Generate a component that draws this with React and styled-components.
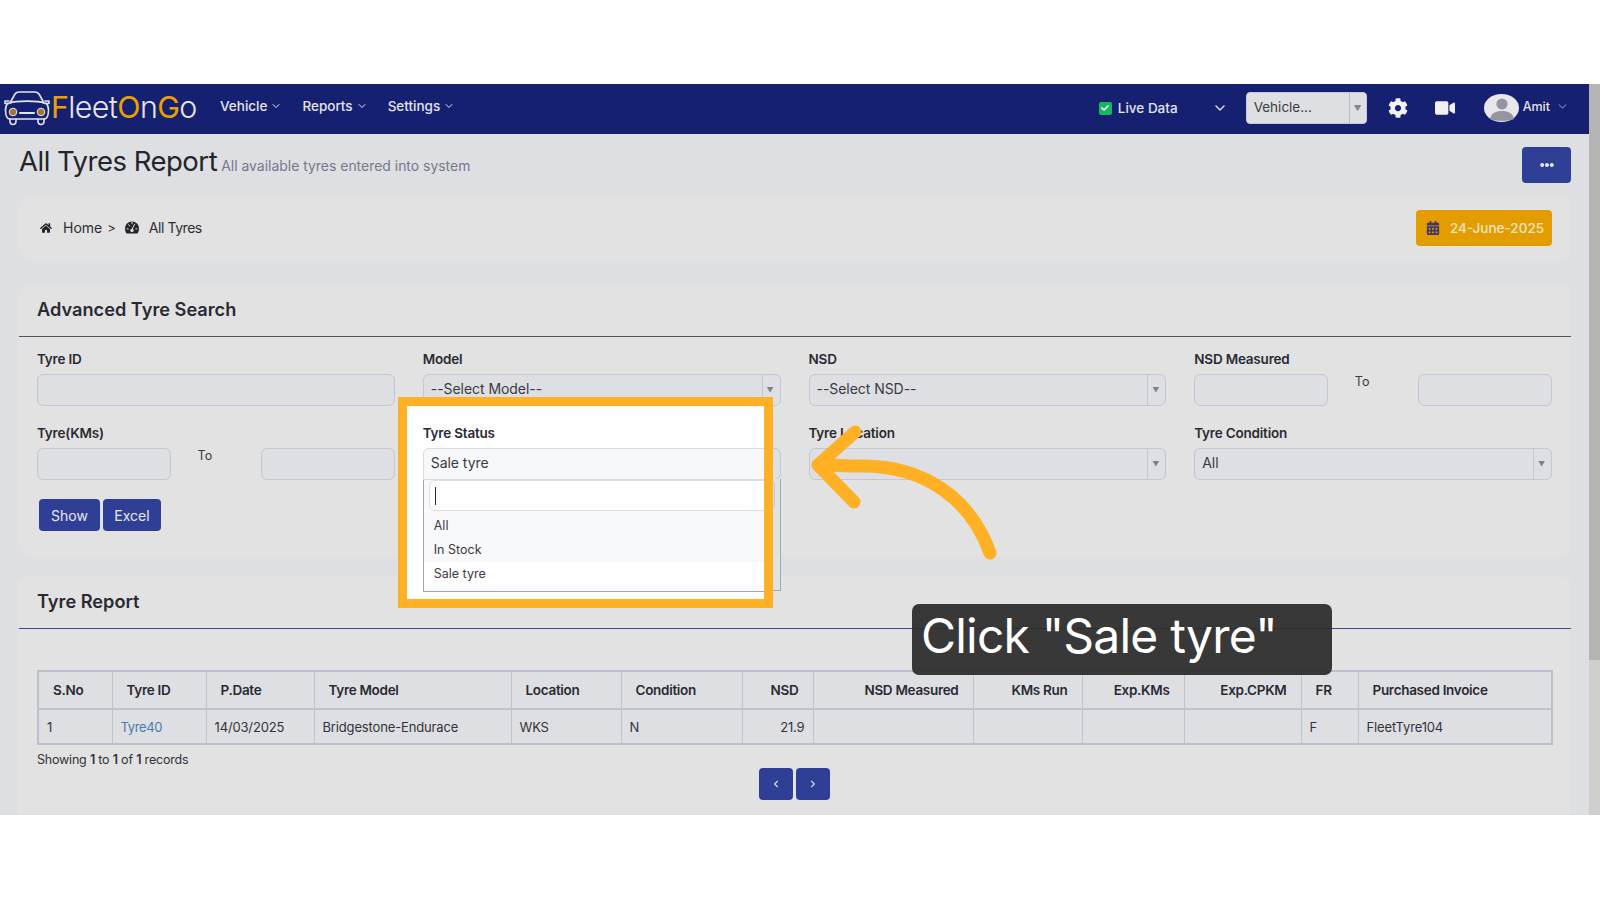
import styled, { createGlobalStyle } from "styled-components";
import {
  FaHome,
  FaCalendarAlt,
  FaCog,
  FaVideo,
  FaEllipsisH,
  FaCheck,
  FaChevronLeft,
  FaChevronRight,
} from "react-icons/fa";
import { ChevronDown } from "lucide-react";

const GlobalStyle = createGlobalStyle`
  html, body {
    margin: 0;
    padding: 0;
    background: #fff;
    font-family: Inter, "Liberation Sans", sans-serif;
    color: #2a2a33;
  }
  * {
    box-sizing: border-box;
  }
`;

const Screen = styled.div`
  position: relative;
  width: 1600px;
  height: 900px;
  padding-top: 84px;
  background: #fff;
  overflow: hidden;
`;

const Frame = styled.div`
  display: flex;
  height: 731px;
`;

const Scrollbar = styled.div`
  width: 11px;
  background: #cfcfcf;
`;

const ScrollThumb = styled.div`
  height: 576px;
  background: #b4b4b4;
`;

const Main = styled.div`
  width: 1589px;
  height: 100%;
  background: #dedfe2;
  overflow: hidden;
`;

const Navbar = styled.nav`
  display: flex;
  align-items: center;
  height: 50px;
  background: #162070;
  color: #e3e4ea;
`;

const Logo = styled.div`
  display: flex;
  align-items: center;
  width: 220px;
  margin-top: -2px;
  padding-left: 3px;
  flex-shrink: 0;
`;

const LogoText = styled.span`
  margin-top: -2px;
  font-size: 30.4px;
  font-weight: 300;
  letter-spacing: -0.6px;
  color: #e6e7ee;
`;

const LogoAccent = styled.span`
  color: #e9a000;
  font-weight: 400;
`;

const NavItem = styled.div`
  display: flex;
  align-items: center;
  gap: 3px;
  margin-right: 20px;
  margin-top: -6px;
  font-size: 13.5px;
  font-weight: 500;
`;

const NavRight = styled.div`
  display: flex;
  align-items: center;
  margin-left: auto;
  margin-top: -3px;
`;

const LiveCheck = styled.span`
  display: flex;
  align-items: center;
  justify-content: center;
  width: 13px;
  height: 13px;
  margin-top: 1px;
  border-radius: 2px;
  background: #16b85e;
  color: #fff;
  font-size: 8px;
`;

const LiveLabel = styled.span`
  margin-left: 6px;
  margin-top: 1px;
  font-size: 13.5px;
  font-weight: 500;
`;

const LiveChevron = styled(ChevronDown)`
  margin-left: 34px;
  margin-top: 1px;
`;

const VehicleSelect = styled.div`
  display: flex;
  align-items: stretch;
  width: 121px;
  height: 32px;
  margin-left: 18px;
  border-radius: 4px;
  background: #dedfe2;
  border: 1px solid #c7c9d2;
  color: #3b3b44;
  font-size: 13.5px;
`;

const VehicleValue = styled.span`
  flex: 1;
  padding: 6px 0 0 7px;
`;

const VehicleCaret = styled.span`
  display: flex;
  align-items: center;
  justify-content: center;
  width: 17px;
  border-left: 1px solid #b8bac4;
  color: #85868f;
  font-size: 8px;
`;

const NavIcon = styled.span`
  display: flex;
  margin-left: ${({ $gap }) => $gap}px;
  color: #f1f1f4;
  font-size: 20px;
`;

const Avatar = styled.svg`
  width: 35px;
  height: 28px;
  margin-left: 29px;
`;

const UserName = styled.span`
  margin-left: 4px;
  margin-top: -2px;
  font-size: 12.5px;
  font-weight: 500;
`;

const UserChevron = styled(ChevronDown)`
  margin: -3px 20px 0 6px;
  opacity: 0.45;
`;

const PageHead = styled.header`
  display: flex;
  align-items: flex-start;
  justify-content: space-between;
  height: 62px;
  padding: 13px 18px 0 19px;
`;

const TitleRow = styled.div`
  display: flex;
  align-items: baseline;
  gap: 4px;
  margin-top: -1px;
`;

const Title = styled.h1`
  margin: 0;
  font-size: 27.5px;
  line-height: 30px;
  font-weight: 400;
  letter-spacing: -0.5px;
  color: #24242b;
`;

const Subtitle = styled.span`
  font-size: 13.95px;
  color: #75798c;
`;

const MenuButton = styled.button`
  display: flex;
  align-items: center;
  justify-content: center;
  width: 49px;
  height: 36px;
  border: 0;
  border-radius: 4px;
  background: #303f96;
  color: #e6e7ef;
  font-size: 14px;
`;

const Card = styled.section`
  margin: 0 18px ${({ $bottom }) => $bottom}px 19px;
  border-radius: 10px;
  background: #e2e2e2;
`;

const BreadcrumbBar = styled(Card)`
  display: flex;
  align-items: center;
  justify-content: space-between;
  height: 65px;
  padding: 0 19px 0 21px;
`;

const Crumbs = styled.div`
  display: flex;
  align-items: center;
  margin-top: -2px;
  font-size: 14px;
  color: #2e2e36;
`;

const CrumbIcon = styled.span`
  display: flex;
  margin-right: 10px;
  font-size: 12px;
  color: #24242b;
`;

const HomeIcon = styled(CrumbIcon)`
  margin-right: 11px;
`;

const CrumbSep = styled.span`
  margin: 0 9px 0 5px;
  font-size: 13px;
`;

const CrumbCurrent = styled.span`
  letter-spacing: -0.45px;
`;

const DateBadge = styled.div`
  display: flex;
  align-items: center;
  gap: 10px;
  width: 136px;
  height: 36px;
  margin-top: -1px;
  padding-left: 10px;
  border-radius: 4px;
  background: #e49d00;
  color: #f1e3c4;
  font-size: 13.5px;
  font-weight: 500;
  white-space: nowrap;
  svg {
    color: #3d3670;
  }
`;

const CardTitle = styled.h2`
  display: flex;
  align-items: center;
  height: 53px;
  margin: 0;
  padding: 0 18px 2px 18px;
  font-size: 18.2px;
  font-weight: 600;
  color: #2a2a33;
  border-bottom: 1px solid ${({ $line }) => $line};
`;

const FormGrid = styled.div`
  display: grid;
  grid-template-columns: repeat(4, 1fr);
  column-gap: 28px;
  row-gap: 18px;
  padding: 13px 19px 0 18px;
`;

const Field = styled.div`
  position: relative;
`;

const FieldLabel = styled.label`
  display: block;
  height: 18px;
  margin-bottom: 6px;
  font-size: 13.5px;
  line-height: 18px;
  font-weight: 600;
  letter-spacing: -0.2px;
  color: #2a2a33;
`;

const TextInput = styled.input`
  display: block;
  width: 100%;
  height: 32px;
  border: 1px solid #c4c7d2;
  border-radius: 6px;
  background: #dedfe2;
`;

const RangeRow = styled.div`
  display: flex;
  justify-content: space-between;
`;

const RangeInput = styled(TextInput)`
  width: 134px;
`;

const RangeTo = styled.span`
  margin-left: -22px;
  font-size: 12.5px;
  color: #3a3a44;
`;

const SelectBox = styled.div`
  display: flex;
  align-items: stretch;
  height: 32px;
  border: 1px solid #c4c7d2;
  border-radius: 6px;
  background: #dedfe2;
  color: #3a3a44;
  font-size: 14px;
`;

const SelectValue = styled.span`
  flex: 1;
  padding: 5px 0 0 7px;
  letter-spacing: -0.05px;
`;

const SelectCaret = styled.span`
  display: flex;
  align-items: center;
  justify-content: center;
  width: 18px;
  padding-right: 2px;
  border-left: 1px solid #c4c7d2;
  color: #7f8089;
  font-size: 7px;
`;

const StaleDropdown = styled.div`
  position: absolute;
  top: 55px;
  left: 0;
  width: 358px;
  height: 112px;
  border: 1px solid #a4a7b4;
  border-top: 0;
  background: #e2e2e2;
`;

const StaleSearch = styled.div`
  height: 31px;
  margin: 0 5px;
  border: 1px solid #c4c7d2;
  border-radius: 6px;
`;

const Spotlight = styled.div`
  position: absolute;
  top: -27px;
  left: -25px;
  width: 375px;
  height: 211px;
  padding: 18px 0 0 16px;
  border: 9px solid #ffb024;
  background: #fff;
  overflow: hidden;
  z-index: 2;
`;

const SpotlightInner = styled.div`
  width: 358px;
`;

const OpenSelect = styled(SelectBox)`
  border-color: #d9dbe2;
  border-bottom-left-radius: 0;
  background: #f7f8fa;
  color: #3a3a44;
`;

const OpenList = styled.div`
  height: 112px;
  border: 1px solid #a4a7b4;
  border-top: 0;
  background: #f8f9fa;
`;

const SearchBox = styled.div`
  display: flex;
  align-items: center;
  height: 31px;
  margin: 0 5px;
  padding-left: 5px;
  border: 1px solid #dcdee4;
  border-radius: 6px;
  background: #fff;
`;

const Caret = styled.span`
  width: 1px;
  height: 18px;
  background: #2a2a33;
`;

const OptionRow = styled.div`
  height: 24px;
  padding: 3px 0 0 10px;
  font-size: 12.5px;
  line-height: 18px;
  color: #3a3a44;
  background: ${({ $active }) => ($active ? "#fff" : "transparent")};
`;

const OptionGap = styled.div`
  height: 3px;
`;

const ButtonRow = styled.div`
  display: flex;
  gap: 3px;
  padding: 19px 19px 26px 20px;
`;

const ActionButton = styled.button`
  height: 32px;
  width: ${({ $w }) => $w}px;
  border: 0;
  border-radius: 4px;
  background: #303f96;
  color: #e8e9f2;
  font-family: inherit;
  font-size: 14px;
`;

const TableWrap = styled.div`
  padding: 41px 18px 40px;
`;

const Table = styled.table`
  width: 1514px;
  table-layout: fixed;
  border-collapse: collapse;
  border: 2px solid #bdc0cb;
  font-size: 13px;
  background: #dedfe2;
`;

const HeadCell = styled.th`
  height: 38px;
  padding: 0 ${({ $right }) => ($right ? "14px" : "0")} 0 ${({ $right }) => ($right ? "0" : "14px")};
  border: 1px solid #c0c3cd;
  border-bottom-width: 2px;
  font-size: 13.5px;
  font-weight: 600;
  letter-spacing: -0.3px;
  color: #2a2a33;
  text-align: ${({ $right }) => ($right ? "right" : "left")};
`;

const BodyCell = styled.td`
  height: 35px;
  padding: 0 8px;
  border: 1px solid #c0c3cd;
  letter-spacing: -0.15px;
  color: #33333c;
  text-align: ${({ $right }) => ($right ? "right" : "left")};
`;

const TyreLink = styled.a`
  color: #4a7bb0;
  letter-spacing: -0.35px;
`;

const TableInfo = styled.div`
  margin-top: 7px;
  height: 16px;
  font-size: 12.5px;
  letter-spacing: -0.2px;
  color: #33333c;
`;

const InfoStrong = styled.b`
  font-weight: 600;
`;

const Pager = styled.div`
  display: flex;
  justify-content: center;
  gap: 3px;
  margin-right: 1px;
`;

const PagerButton = styled.button`
  display: flex;
  align-items: center;
  justify-content: center;
  width: 34px;
  height: 32px;
  border: 0;
  border-radius: 4px;
  background: #303f96;
  color: #dfe1ee;
  font-size: 8px;
`;

const Pointer = styled.svg`
  position: absolute;
  top: 420px;
  left: 800px;
  width: 210px;
  height: 160px;
  z-index: 3;
`;

const Callout = styled.div`
  position: absolute;
  top: 604px;
  left: 912px;
  width: 420px;
  height: 71px;
  padding-left: 9px;
  border-radius: 7px;
  background: rgba(45, 45, 45, 0.94);
  color: #fff;
  font-size: 48px;
  line-height: 64px;
  letter-spacing: -0.8px;
  white-space: nowrap;
  z-index: 3;
`;

const columns = [
  { name: "S.No", width: 74 },
  { name: "Tyre ID", width: 94 },
  { name: "P.Date", width: 108 },
  { name: "Tyre Model", width: 197 },
  { name: "Location", width: 110 },
  { name: "Condition", width: 121 },
  { name: "NSD", width: 71, right: true },
  { name: "NSD Measured", width: 160, right: true },
  { name: "KMs Run", width: 109, right: true },
  { name: "Exp.KMs", width: 102, right: true },
  { name: "Exp.CPKM", width: 117, right: true },
  { name: "FR", width: 57 },
  { name: "Purchased Invoice", width: 194 },
];

const CarLogo = () => (
  <svg width="48" height="36" viewBox="0 0 48 36" fill="none">
    <g stroke="#e3e4ea" strokeWidth="1.6" strokeLinecap="round" strokeLinejoin="round">
      <path d="M7 13 L12 4 C13 2.5 14 2 16 2 H32 C34 2 35 2.5 36 4 L41 13" />
      <path d="M7 13 C12 10.5 36 10.5 41 13" />
      <path d="M5 13 C3 15 2.5 17 2.5 20 C2.5 26 4 29 7 29 H41 C44 29 45.5 26 45.5 20 C45.5 17 45 15 43 13" />
      <path d="M6 13.5 H2 V11 H6" />
      <path d="M42 13.5 H46 V11 H42" />
      <path d="M17 23 H31" strokeWidth="2" />
      <path d="M7 29 V31 C7 33 8 34.5 10 34.5 C12 34.5 13 33 13 31 V29" />
      <path d="M35 29 V31 C35 33 36 34.5 38 34.5 C40 34.5 41 33 41 31 V29" />
    </g>
    <circle cx="10" cy="22" r="3.8" fill="#a5762a" stroke="#e3e4ea" />
    <circle cx="38" cy="22" r="3.8" fill="#a5762a" stroke="#e3e4ea" />
  </svg>
);

const GaugeIcon = () => (
  <svg width="14" height="13" viewBox="0 0 14 13">
    <path d="M1.6 12.6 C0.6 11.4 0 9.6 0 7.6 C0 3.4 3.1 0.4 7 0.4 C10.9 0.4 14 3.4 14 7.6 C14 9.6 13.4 11.4 12.4 12.6 Z" fill="#24242b" />
    <path d="M7 8.5 L9.8 2.8 M3.4 3.4 L5 5.4 M1.6 7.8 L3.6 8 M10.4 8 L12.4 7.8 M7 1 V3.2" stroke="#e2e2e2" strokeWidth="1" />
    <circle cx="7" cy="9.4" r="1.7" fill="#e2e2e2" />
  </svg>
);

const Select = ({ value }) => (
  <SelectBox>
    <SelectValue>{value}</SelectValue>
    <SelectCaret>▼</SelectCaret>
  </SelectBox>
);

const Range = () => (
  <RangeRow>
    <RangeInput />
    <RangeTo>To</RangeTo>
    <RangeInput />
  </RangeRow>
);

const App = () => {
  return (
    <Screen>
      <GlobalStyle />
      <Frame>
        <Main>
          <Navbar>
            <Logo>
              <CarLogo />
              <LogoText>
                <LogoAccent>F</LogoAccent>leet<LogoAccent>O</LogoAccent>n
                <LogoAccent>G</LogoAccent>o
              </LogoText>
            </Logo>
            <NavItem>
              Vehicle <ChevronDown size={12} />
            </NavItem>
            <NavItem>
              Reports <ChevronDown size={12} />
            </NavItem>
            <NavItem>
              Settings <ChevronDown size={12} />
            </NavItem>
            <NavRight>
              <LiveCheck>
                <FaCheck />
              </LiveCheck>
              <LiveLabel>Live Data</LiveLabel>
              <LiveChevron size={16} />
              <VehicleSelect>
                <VehicleValue>Vehicle...</VehicleValue>
                <VehicleCaret>▼</VehicleCaret>
              </VehicleSelect>
              <NavIcon $gap={21}>
                <FaCog />
              </NavIcon>
              <NavIcon $gap={27}>
                <FaVideo />
              </NavIcon>
              <Avatar viewBox="0 0 35 28">
                <ellipse cx="17.5" cy="14" rx="17.5" ry="14" fill="#e8e8ec" />
                <circle cx="18" cy="10" r="5.6" fill="#94959f" />
                <path d="M6 25 C7 19 12 17 18 17 C24 17 29 19 30 25 C26 27.5 10 27.5 6 25 Z" fill="#94959f" />
              </Avatar>
              <UserName>Amit</UserName>
              <UserChevron size={13} />
            </NavRight>
          </Navbar>

          <PageHead>
            <TitleRow>
              <Title>All Tyres Report</Title>
              <Subtitle>All available tyres entered into system</Subtitle>
            </TitleRow>
            <MenuButton>
              <FaEllipsisH />
            </MenuButton>
          </PageHead>

          <BreadcrumbBar $bottom={23}>
            <Crumbs>
              <HomeIcon>
                <FaHome />
              </HomeIcon>
              Home
              <CrumbSep>&gt;</CrumbSep>
              <CrumbIcon>
                <GaugeIcon />
              </CrumbIcon>
              <CrumbCurrent>All Tyres</CrumbCurrent>
            </Crumbs>
            <DateBadge>
              <FaCalendarAlt size={14} />
              24-June-2025
            </DateBadge>
          </BreadcrumbBar>

          <Card $bottom={19}>
            <CardTitle $line="#4e5160">Advanced Tyre Search</CardTitle>
            <FormGrid>
              <Field>
                <FieldLabel>Tyre ID</FieldLabel>
                <TextInput />
              </Field>
              <Field>
                <FieldLabel>Model</FieldLabel>
                <Select value="--Select Model--" />
              </Field>
              <Field>
                <FieldLabel>NSD</FieldLabel>
                <Select value="--Select NSD--" />
              </Field>
              <Field>
                <FieldLabel>NSD Measured</FieldLabel>
                <Range />
              </Field>
              <Field>
                <FieldLabel>Tyre(KMs)</FieldLabel>
                <Range />
              </Field>
              <Field>
                <FieldLabel>Tyre Status</FieldLabel>
                <Select value="" />
                <StaleDropdown>
                  <StaleSearch />
                </StaleDropdown>
                <Spotlight>
                  <SpotlightInner>
                    <FieldLabel>Tyre Status</FieldLabel>
                    <OpenSelect>
                      <SelectValue>Sale tyre</SelectValue>
                    </OpenSelect>
                    <OpenList>
                      <SearchBox>
                        <Caret />
                      </SearchBox>
                      <OptionGap />
                      <OptionRow>All</OptionRow>
                      <OptionRow>In Stock</OptionRow>
                      <OptionRow $active>Sale tyre</OptionRow>
                    </OpenList>
                  </SpotlightInner>
                </Spotlight>
              </Field>
              <Field>
                <FieldLabel>Tyre Location</FieldLabel>
                <Select value="" />
              </Field>
              <Field>
                <FieldLabel>Tyre Condition</FieldLabel>
                <Select value="All" />
              </Field>
            </FormGrid>
            <ButtonRow>
              <ActionButton $w={61}>Show</ActionButton>
              <ActionButton $w={58}>Excel</ActionButton>
            </ButtonRow>
          </Card>

          <Card $bottom={0}>
            <CardTitle $line="#3c4a8c">Tyre Report</CardTitle>
            <TableWrap>
              <Table>
                <colgroup>
                  {columns.map((col) => (
                    <col key={col.name} width={col.width} />
                  ))}
                </colgroup>
                <thead>
                  <tr>
                    {columns.map((col) => (
                      <HeadCell key={col.name} $right={col.right}>
                        {col.name}
                      </HeadCell>
                    ))}
                  </tr>
                </thead>
                <tbody>
                  <tr>
                    <BodyCell>1</BodyCell>
                    <BodyCell>
                      <TyreLink>Tyre40</TyreLink>
                    </BodyCell>
                    <BodyCell>14/03/2025</BodyCell>
                    <BodyCell>Bridgestone-Endurace</BodyCell>
                    <BodyCell>WKS</BodyCell>
                    <BodyCell>N</BodyCell>
                    <BodyCell $right>21.9</BodyCell>
                    <BodyCell />
                    <BodyCell />
                    <BodyCell />
                    <BodyCell />
                    <BodyCell>F</BodyCell>
                    <BodyCell>FleetTyre104</BodyCell>
                  </tr>
                </tbody>
              </Table>
              <TableInfo>
                Showing <InfoStrong>1</InfoStrong> to <InfoStrong>1</InfoStrong> of{" "}
                <InfoStrong>1</InfoStrong> records
              </TableInfo>
              <Pager>
                <PagerButton>
                  <FaChevronLeft />
                </PagerButton>
                <PagerButton>
                  <FaChevronRight />
                </PagerButton>
              </Pager>
            </TableWrap>
          </Card>
        </Main>
        <Scrollbar>
          <ScrollThumb />
        </Scrollbar>
      </Frame>

      <Pointer viewBox="0 0 210 160" fill="none">
        <g stroke="#ffb024" strokeWidth="13" strokeLinecap="round" strokeLinejoin="round">
          <path d="M190 133 C172 82 128 46 62 46 C46 46 32 45 18 45" />
          <path d="M55 12 L18 45 L54 82" />
        </g>
      </Pointer>
      <Callout>Click "Sale tyre"</Callout>
    </Screen>
  );
};

export default App;
